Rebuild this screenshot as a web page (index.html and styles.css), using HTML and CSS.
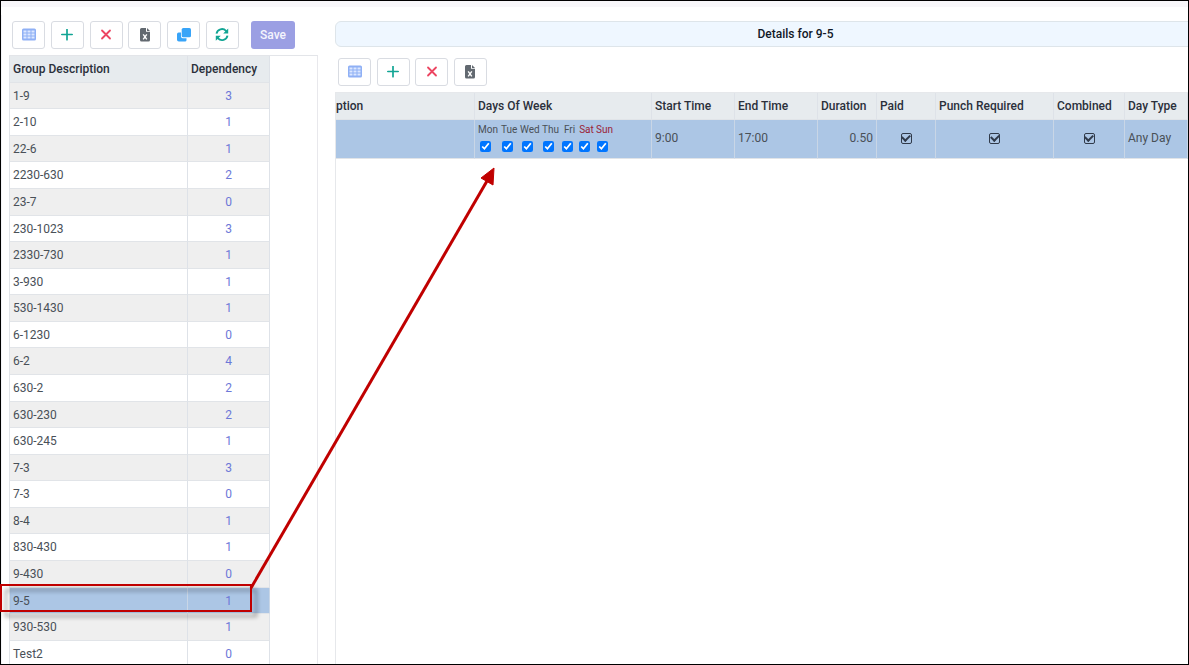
FILE: index.html
```html
<!DOCTYPE html>
<html lang="en">
<head>
<meta charset="utf-8">
<title>Details for 9-5</title>
<link rel="stylesheet" href="styles.css">
</head>
<body>
<svg class="sprite" aria-hidden="true">
  <symbol id="i-table" viewBox="0 0 14 14"><rect y="0.500" width="14" height="12" rx="1.500" fill="#8fb0f5"/><path d="M1.500 2.500h3v2h-3zM5.500 2.500h3v2h-3zM9.500 2.500h3v2h-3zM1.500 5.500h3v2h-3zM5.500 5.500h3v2h-3zM9.500 5.500h3v2h-3zM1.500 8.500h3v2h-3zM5.500 8.500h3v2h-3zM9.500 8.500h3v2h-3z" fill="#dce7ff"/></symbol>
  <symbol id="i-plus" viewBox="0 0 12 12"><path d="M6 .3v10.400M.8 5.500h10.400" stroke="#12a594" stroke-width="1.700" stroke-linecap="round"/></symbol>
  <symbol id="i-x" viewBox="0 0 12 12"><path d="M2 1.500l8 8M10 1.500l-8 8" stroke="#ec4561" stroke-width="1.800" stroke-linecap="round"/></symbol>
  <symbol id="i-file" viewBox="0 0 14 14"><path d="M3.500 0H8v3.800h4v8.200a1.500 1.500 0 0 1-1.500 1.500h-7A1.500 1.500 0 0 1 2 12V1.500A1.500 1.500 0 0 1 3.500 0z" fill="#626970"/><path d="M9 0l3 3H9z" fill="#626970"/><path d="M5.200 6.300l3.600 5M8.800 6.300l-3.600 5" stroke="#fff" stroke-width="1.400"/></symbol>
  <symbol id="i-copy" viewBox="0 0 14 14"><path d="M2 4.500h2V8.500A1.700 1.700 0 0 0 5.700 10.200H9.500v2A1.500 1.500 0 0 1 8 13.500H1.800A1.800 1.800 0 0 1 0 11.700V6.300A1.800 1.800 0 0 1 2 4.500z" fill="#38a4f8"/><rect x="4.700" width="9.300" height="9.300" rx="1.600" fill="#38a4f8"/></symbol>
  <symbol id="i-sync" viewBox="0 0 14 14"><path d="M1.500 5.600A5.600 5.600 0 0 1 11 2.800L12 3.800M12.500 7.600A5.600 5.600 0 0 1 3 10.400L2 9.400" fill="none" stroke="#12a594" stroke-width="1.900"/><path d="M13.200 .4v5H8.200zM.8 12.800v-5h5z" fill="#12a594"/></symbol>
</svg>
<div class="app">
  <section class="groups">
    <div class="bar">
      <div class="tools tools-six">
        <button class="tool" aria-label="Columns"><svg class="w14"><use href="#i-table"/></svg></button>
        <button class="tool" aria-label="Add"><svg class="w12"><use href="#i-plus"/></svg></button>
        <button class="tool" aria-label="Delete"><svg class="w12"><use href="#i-x"/></svg></button>
        <button class="tool" aria-label="Export"><svg class="w14"><use href="#i-file"/></svg></button>
        <button class="tool" aria-label="Copy"><svg class="w14"><use href="#i-copy"/></svg></button>
        <button class="tool" aria-label="Refresh"><svg class="w14"><use href="#i-sync"/></svg></button>
      </div>
      <button class="save">Save</button>
    </div>
    <div class="list">
      <table class="grid group-grid">
        <colgroup><col class="c-name"><col class="c-dep"></colgroup>
        <thead><tr><th>Group Description</th><th>Dependency</th></tr></thead>
        <tbody>
          <tr><td>1-9</td><td><a href="#">3</a></td></tr>
          <tr><td>2-10</td><td><a href="#">1</a></td></tr>
          <tr><td>22-6</td><td><a href="#">1</a></td></tr>
          <tr><td>2230-630</td><td><a href="#">2</a></td></tr>
          <tr><td>23-7</td><td><a href="#">0</a></td></tr>
          <tr><td>230-1023</td><td><a href="#">3</a></td></tr>
          <tr><td>2330-730</td><td><a href="#">1</a></td></tr>
          <tr><td>3-930</td><td><a href="#">1</a></td></tr>
          <tr><td>530-1430</td><td><a href="#">1</a></td></tr>
          <tr><td>6-1230</td><td><a href="#">0</a></td></tr>
          <tr><td>6-2</td><td><a href="#">4</a></td></tr>
          <tr><td>630-2</td><td><a href="#">2</a></td></tr>
          <tr><td>630-230</td><td><a href="#">2</a></td></tr>
          <tr><td>630-245</td><td><a href="#">1</a></td></tr>
          <tr><td>7-3</td><td><a href="#">3</a></td></tr>
          <tr><td>7-3</td><td><a href="#">0</a></td></tr>
          <tr><td>8-4</td><td><a href="#">1</a></td></tr>
          <tr><td>830-430</td><td><a href="#">1</a></td></tr>
          <tr><td>9-430</td><td><a href="#">0</a></td></tr>
          <tr class="selected"><td>9-5</td><td><a href="#">1</a></td></tr>
          <tr><td>930-530</td><td><a href="#">1</a></td></tr>
          <tr><td>Test2</td><td><a href="#">0</a></td></tr>
        </tbody>
      </table>
    </div>
  </section>
  <section class="details">
    <h1 class="title">Details for 9-5</h1>
    <div class="tools tools-four">
      <button class="tool" aria-label="Columns"><svg class="w14"><use href="#i-table"/></svg></button>
      <button class="tool" aria-label="Add"><svg class="w12"><use href="#i-plus"/></svg></button>
      <button class="tool" aria-label="Delete"><svg class="w12"><use href="#i-x"/></svg></button>
      <button class="tool" aria-label="Export"><svg class="w14"><use href="#i-file"/></svg></button>
    </div>
    <div class="detail-body">
      <table class="grid detail-grid">
        <colgroup><col class="d-desc"><col class="d-days"><col class="d-time"><col class="d-time"><col class="d-num"><col class="d-num"><col class="d-punch"><col class="d-comb"><col></colgroup>
        <thead><tr><th class="cut">ption</th><th>Days Of Week</th><th>Start Time</th><th>End Time</th><th>Duration</th><th>Paid</th><th>Punch Required</th><th>Combined</th><th>Day Type</th></tr></thead>
        <tbody>
          <tr class="selected">
            <td></td>
            <td><div class="days">
              <label>Mon<input type="checkbox" checked></label>
              <label>Tue<input type="checkbox" checked></label>
              <label>Wed<input type="checkbox" checked></label>
              <label>Thu<input type="checkbox" checked></label>
              <label>Fri<input type="checkbox" checked></label>
              <label class="weekend">Sat<input type="checkbox" checked></label>
              <label class="weekend">Sun<input type="checkbox" checked></label>
            </div></td>
            <td>9:00</td>
            <td>17:00</td>
            <td class="number">0.50</td>
            <td><input class="flag" type="checkbox" checked aria-label="Paid"></td>
            <td><input class="flag" type="checkbox" checked aria-label="Punch Required"></td>
            <td><input class="flag" type="checkbox" checked aria-label="Combined"></td>
            <td>Any Day</td>
          </tr>
        </tbody>
      </table>
    </div>
  </section>
</div>
<svg class="callout" aria-hidden="true">
  <rect class="callout-box" x="1" y="585" width="250" height="26"/>
  <path d="M251 588L487 181" stroke="#c00000" stroke-width="3"/>
  <path d="M494 168L493 185L481 178z" fill="#c00000" stroke="#c00000"/>
</svg>
</body>
</html>
```
FILE: styles.css
```css
* { box-sizing: border-box; }

body {
  margin: 0;
  background: #fff;
  color: #495057;
  font: 12px/16px Roboto, sans-serif;
}

.sprite { position: absolute; width: 0; height: 0; }

.app {
  display: flex;
  height: 100vh;
  overflow: hidden;
  border: 1px solid #000;
  padding-top: 14px;
  background: linear-gradient(#f8f7fa 6px, #fff 6px);
}

.groups {
  flex: none;
  display: flex;
  flex-direction: column;
  width: 317px;
  border-left: 1px solid #f3f3f6;
  padding: 6px 0 0 7px;
}

.bar { display: flex; gap: 12px; padding: 0 0 6px 3px; }

.tools { display: flex; justify-content: space-between; }
.tools-six { width: 227px; }
.tools-four { width: 149px; margin: 11px 0 6px 3px; }

.tool {
  display: grid;
  place-items: center;
  width: 33px;
  height: 28px;
  padding: 0;
  border: 1px solid #d9dce2;
  border-radius: 3px;
  background: #fff;
}

.w12 { width: 12px; height: 12px; }
.w14 { width: 14px; height: 14px; }

.save {
  width: 44px;
  height: 28px;
  padding: 0;
  border: 0;
  border-radius: 3px;
  background: #9b9fe3;
  color: #f4f4fd;
  font: 500 12px/16px Roboto, sans-serif;
}

.list {
  flex: 1;
  min-height: 0;
  overflow: hidden;
  border-top: 1px solid #e3e5e9;
  border-right: 1px solid #e8e8ec;
}

.grid {
  table-layout: fixed;
  border-collapse: separate;
  border-spacing: 0;
}

.grid th,
.grid td {
  height: 27px;
  padding: 0 3px;
  border-right: 1px solid #dee2e8;
  border-bottom: 1px solid #e1e4e8;
  text-align: left;
  white-space: nowrap;
}

.grid th { background: #e7ebee; color: #2b303b; font-weight: 500; }

.group-grid { width: 261px; border-left: 1px solid #e1e4e8; }
.c-name { width: 178px; }
.c-dep { width: 82px; }
.group-grid td:last-child { text-align: center; }
.group-grid tr:nth-child(odd) td { background: #efefef; }
.group-grid tr:nth-child(7n+1) td,
.group-grid tr:nth-child(7n+3) td,
.group-grid tr:nth-child(7n+6) td { height: 26px; }
.grid tr.selected td { background: #acc6e5; border-right-color: #c9d6e6; }
.grid a { color: #6d78d8; text-decoration: none; }

.details {
  flex: 1;
  min-width: 0;
  display: flex;
  flex-direction: column;
  padding: 6px 0 0 17px;
}

.title {
  margin: 0 -68px 0 0;
  border: 1px solid #dee5ea;
  border-radius: 6px;
  padding: 4px;
  background: #eff7ff;
  color: #111827;
  text-align: center;
  font-size: 12px;
  font-weight: 500;
  line-height: 16px;
}

.detail-body {
  flex: 1;
  border-left: 1px solid #e6e8eb;
  border-top: 1px solid #e6e8eb;
}

.detail-grid { width: 100%; }
.detail-grid td { height: 39px; padding-bottom: 2px; }
.detail-grid .cut { padding-left: 0; }
.detail-grid .number { text-align: right; }
.d-desc { width: 139px; }
.d-days { width: 177px; }
.d-time { width: 83px; }
.d-num { width: 59px; }
.d-punch { width: 118px; }
.d-comb { width: 71px; }

.days {
  display: grid;
  grid-template-columns: 23px 19px 22px 20px 17px 17px 18px;
  justify-items: start;
  font-size: 10px;
  line-height: 12px;
}

.days label {
  display: flex;
  flex-direction: column;
  align-items: center;
  gap: 5px;
}

.days input { width: 11px; height: 11px; margin: 0 4px 0 0; }
.days .weekend { color: #9b2335; }

.flag {
  appearance: none;
  display: grid;
  place-items: center;
  width: 11px;
  height: 11px;
  margin: 0 auto;
  border: 1px solid #303a4a;
  border-radius: 2px;
}

.flag::after {
  content: "";
  width: 6px;
  height: 4px;
  margin-bottom: 2px;
  border: solid #303a4a;
  border-width: 0 0 2px 2px;
  transform: rotate(-45deg);
}

.callout {
  position: absolute;
  top: 0;
  left: 0;
  width: 100%;
  height: 100%;
  pointer-events: none;
}

.callout-box {
  fill: none;
  stroke: #c00000;
  stroke-width: 2px;
  filter: drop-shadow(5px 5px 2px rgba(0, 0, 0, 0.4));
}
```
